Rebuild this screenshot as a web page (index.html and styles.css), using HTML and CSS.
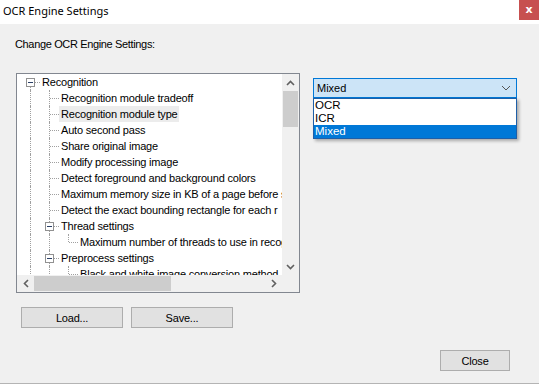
FILE: index.html
```html
<!DOCTYPE html>
<html>
	<head>
		<meta charset="utf-8">
		<title>OCR Engine Settings</title>
		<link rel="stylesheet" href="styles.css">
	</head>
	<body>
		<div class="window">
			<div class="titlebar">
				<span class="title">OCR Engine Settings</span>
				<div class="close">x</div>
			</div>
			<div class="content">
				<p class="caption">Change OCR Engine Settings:</p>
				<div class="main">
					<div class="tree-box">
						<div class="tree-view">
							<div class="row"><i class="c root"><b class="box"></b></i><span class="label">Recognition</span></div>
							<div class="row"><i class="c v"></i><i class="c t"></i><span class="label">Recognition module tradeoff</span></div>
							<div class="row"><i class="c v"></i><i class="c t"></i><span class="label hot">Recognition module type</span></div>
							<div class="row"><i class="c v"></i><i class="c t"></i><span class="label">Auto second pass</span></div>
							<div class="row"><i class="c v"></i><i class="c t"></i><span class="label">Share original image</span></div>
							<div class="row"><i class="c v"></i><i class="c t"></i><span class="label">Modify processing image</span></div>
							<div class="row"><i class="c v"></i><i class="c t"></i><span class="label">Detect foreground and background colors</span></div>
							<div class="row"><i class="c v"></i><i class="c t"></i><span class="label">Maximum memory size in KB of a page before s</span></div>
							<div class="row"><i class="c v"></i><i class="c t"></i><span class="label">Detect the exact bounding rectangle for each r</span></div>
							<div class="row"><i class="c v"></i><i class="c t"><b class="box"></b></i><span class="label">Thread settings</span></div>
							<div class="row"><i class="c v"></i><i class="c v"></i><i class="c l"></i><span class="label">Maximum number of threads to use in recog</span></div>
							<div class="row"><i class="c v"></i><i class="c t"><b class="box"></b></i><span class="label">Preprocess settings</span></div>
							<div class="row"><i class="c v"></i><i class="c v"></i><i class="c t"></i><span class="label">Black and white image conversion method</span></div>
						</div>
						<div class="vscroll">
							<div class="arrow"><svg width="9" height="6" viewBox="0 0 9 6"><polyline points="1,5 4.5,1.5 8,5" /></svg></div>
							<div class="thumb-v"></div>
							<div class="fill"></div>
							<div class="arrow"><svg width="9" height="6" viewBox="0 0 9 6"><polyline points="1,1 4.5,4.5 8,1" /></svg></div>
						</div>
						<div class="hscroll">
							<div class="arrow"><svg width="6" height="9" viewBox="0 0 6 9"><polyline points="5,1 1.5,4.5 5,8" /></svg></div>
							<div class="thumb-h"></div>
							<div class="fill"></div>
							<div class="arrow"><svg width="6" height="9" viewBox="0 0 6 9"><polyline points="1,1 4.5,4.5 1,8" /></svg></div>
						</div>
						<div class="corner"></div>
					</div>
					<div class="combo-wrap">
						<div class="combo">
							<span>Mixed</span>
							<svg width="10" height="6" viewBox="0 0 10 6"><polyline points="1,1 5,5 9,1" /></svg>
						</div>
						<ul class="dropdown">
							<li>OCR</li>
							<li>ICR</li>
							<li class="selected">Mixed</li>
						</ul>
					</div>
				</div>
				<div class="file-buttons">
					<button class="btn wide">Load...</button>
					<button class="btn wide">Save...</button>
				</div>
				<div class="footer">
					<button class="btn close-btn">Close</button>
				</div>
			</div>
		</div>
	</body>
</html>
```

FILE: styles.css
```css
* {
	margin: 0;
	padding: 0;
	box-sizing: border-box;
}
body {
	width: 539px;
	height: 384px;
	overflow: hidden;
	background: #f0f0f0;
	font-family: "Liberation Sans", Arial, sans-serif;
	font-size: 11px;
	letter-spacing: -0.2px;
	color: #000;
}
.window {
	height: 384px;
	border-bottom: 1px solid #b4b4b4;
}

/* title bar */
.titlebar {
	height: 24px;
	background: #fff;
	display: flex;
	justify-content: space-between;
	align-items: flex-start;
}
.title {
	font-family: "Noto Sans", sans-serif;
	font-size: 11px;
	letter-spacing: 0;
	line-height: 20px;
	padding-left: 3px;
	padding-top: 1px;
}
.close {
	width: 20px;
	height: 20px;
	background: #c75050;
	color: #fff;
	font-family: "DejaVu Sans", sans-serif;
	font-weight: bold;
	font-size: 11px;
	line-height: 19px;
	text-align: center;
}

/* dialog body */
.content {
	padding: 14px 29px 0 15px;
}
.caption {
	line-height: 13px;
	letter-spacing: -0.35px;
}
.main {
	display: flex;
	align-items: flex-start;
	margin-top: 22px;
	margin-left: 1px;
}
.main > div {
	flex-shrink: 0;
}

/* tree view */
.tree-box {
	width: 284px;
	height: 220px;
	border: 1px solid #828790;
	background: #fff;
	display: grid;
	grid-template-columns: 265px 17px;
	grid-template-rows: 201px 17px;
}
.tree-view {
	overflow: hidden;
	padding-left: 4px;
}
.row {
	display: flex;
	height: 16px;
	line-height: 16px;
	white-space: nowrap;
}
.c {
	position: relative;
	width: 19px;
	height: 16px;
	flex-shrink: 0;
}
.c.v::before,
.c.t::before,
.c.l::before,
.c.root::before {
	content: "";
	position: absolute;
	left: 9px;
	top: 0;
	height: 16px;
	border-left: 1px dotted #a0a0a0;
}
.c.l::before {
	height: 8px;
}
.c.root::before {
	top: 8px;
	height: 8px;
}
.c.t::after,
.c.l::after,
.c.root::after {
	content: "";
	position: absolute;
	left: 10px;
	top: 8px;
	width: 9px;
	border-top: 1px dotted #a0a0a0;
}
.box {
	position: absolute;
	left: 5px;
	top: 4px;
	width: 9px;
	height: 9px;
	border: 1px solid #919191;
	background: #fff;
	z-index: 1;
}
.box::after {
	content: "";
	position: absolute;
	left: 1px;
	top: 3px;
	width: 5px;
	border-top: 1px solid #2a3f66;
}
.label {
	padding: 0 2px;
}
.label.hot {
	background: #ececec;
}

/* scroll bars */
.vscroll {
	background: #f0f0f0;
	display: flex;
	flex-direction: column;
}
.hscroll {
	background: #f0f0f0;
	display: flex;
}
.corner {
	background: #f0f0f0;
}
.arrow {
	width: 17px;
	height: 17px;
	display: flex;
	align-items: center;
	justify-content: center;
	flex-shrink: 0;
}
.arrow svg polyline {
	fill: none;
	stroke: #606060;
	stroke-width: 1.6;
}
.fill {
	flex: 1;
}
.thumb-v {
	height: 36px;
	margin: 0 1px;
	background: #cdcdcd;
}
.thumb-h {
	width: 137px;
	margin: 1px 0;
	background: #cdcdcd;
}

/* combo box */
.combo-wrap {
	position: relative;
	margin-left: 13px;
	margin-top: 5px;
	width: 204px;
}
.combo {
	height: 20px;
	border: 1px solid #0078d7;
	background: #cce4f7;
	display: flex;
	align-items: center;
	justify-content: space-between;
	padding: 0 5px 0 3px;
	letter-spacing: 0;
}
.combo svg polyline {
	fill: none;
	stroke: #555;
	stroke-width: 1;
}
.dropdown {
	position: absolute;
	top: 20px;
	left: 0;
	width: 204px;
	list-style: none;
	background: #fff;
	border: 1px solid #1e5fa8;
	box-shadow: 2px 2px 3px rgba(0, 0, 0, 0.3);
	letter-spacing: 0;
	font-size: 11.5px;
}
.dropdown li {
	height: 13px;
	line-height: 13px;
	padding-left: 1px;
}
.dropdown li.selected {
	background: #0078d7;
	color: #fff;
}

/* buttons */
.file-buttons {
	display: flex;
	gap: 8px;
	margin-top: 14px;
	margin-left: 6px;
}
.btn {
	height: 21px;
	border: 1px solid #adadad;
	background: #e1e1e1;
	font-family: inherit;
	font-size: 11px;
	letter-spacing: -0.2px;
	color: #000;
}
.btn.wide {
	width: 102px;
}
.footer {
	display: flex;
	justify-content: flex-end;
	margin-top: 22px;
}
.close-btn {
	width: 70px;
}
```
